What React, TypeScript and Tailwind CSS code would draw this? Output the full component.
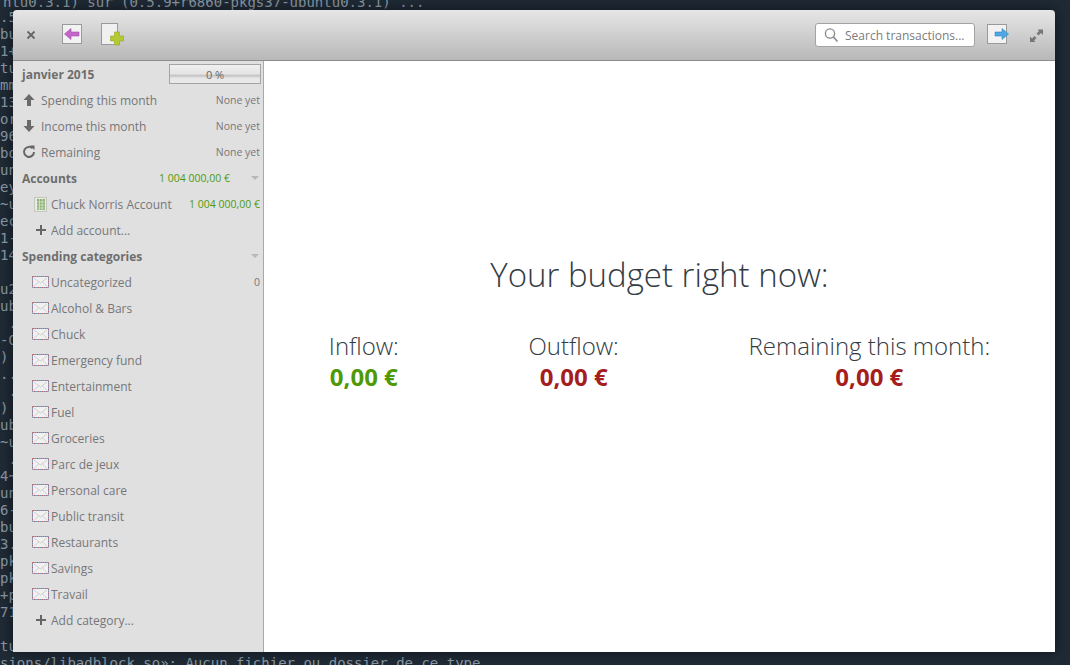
import React from "react";

const terminalLines = [
  ".5", "bu", "1+", "tu", "mm", "13", "or", "96", "bo", "un", "ey", "~u", "ec", "1-", "14", "",
  "u2", "ub", " .", "-O", ")", "..", " .", ")", "ub", "~u", " .", "4~", "un", "6-", "bu", "3.",
  "pk", "pk", "+p", "71", "", "tu",
];

const categories = [
  "Uncategorized",
  "Alcohol & Bars",
  "Chuck",
  "Emergency fund",
  "Entertainment",
  "Fuel",
  "Groceries",
  "Parc de jeux",
  "Personal care",
  "Public transit",
  "Restaurants",
  "Savings",
  "Travail",
];

function Envelope() {
  return (
    <svg width="18" height="14" viewBox="0 0 18 14" className="shrink-0">
      <rect x="0.5" y="1.5" width="16" height="11" fill="#f1f1f1" />
      <rect x="0.5" y="1.5" width="16" height="11" fill="none" stroke="#b5636a" strokeDasharray="2 2" />
      <rect x="0.5" y="1.5" width="16" height="11" fill="none" stroke="#6f93ba" strokeDasharray="2 2" strokeDashoffset="2" />
      <path d="M2 3l6.5 5L15 3M2 11.5l4.5-4.5M15 11.5L10.5 7" fill="none" stroke="#cfcfcf" />
    </svg>
  );
}

function ArrowUp() {
  return (
    <svg width="14" height="14" viewBox="0 0 14 14" className="shrink-0">
      <path d="M7 1l5.5 6H9v6H5V7H1.5z" fill="#6a6a6a" />
    </svg>
  );
}

function ArrowDown() {
  return (
    <svg width="14" height="14" viewBox="0 0 14 14" className="shrink-0">
      <path d="M7 13l5.5-6H9V1H5v6H1.5z" fill="#6a6a6a" />
    </svg>
  );
}

function Refresh() {
  return (
    <svg width="14" height="14" viewBox="0 0 14 14" className="shrink-0">
      <path d="M10.6 3.4A5 5 0 1 0 12 7" fill="none" stroke="#666" strokeWidth="2" />
      <path d="M8 0.5h4.5V5z" fill="#666" />
    </svg>
  );
}

function Plus() {
  return (
    <svg width="12" height="12" viewBox="0 0 12 12" className="shrink-0">
      <path d="M5 1h2v4h4v2H7v4H5V7H1V5h4z" fill="#666" />
    </svg>
  );
}

function Chevron() {
  return <div className="w-0 h-0 border-x-[4px] border-x-transparent border-t-[4px] border-t-[#b8b8b8]" />;
}

function Ledger() {
  return (
    <svg width="13" height="15" viewBox="0 0 13 15" className="shrink-0">
      <rect x="0.5" y="0.5" width="12" height="14" fill="#e8ebe2" stroke="#c4c8bc" />
      <rect x="3" y="2" width="8" height="11" fill="#8fb27a" />
      <path d="M3 5h8M3 8h8M3 11h8M5.5 2v11M8.2 2v11" stroke="#d6e2cc" strokeWidth="0.8" />
    </svg>
  );
}

function Row({ icon, label, right, className }: { icon: React.ReactNode; label: string; right?: string; className?: string }) {
  return (
    <div className={`h-[26px] flex items-center ${className ?? "pl-[9px]"} pr-[3px]`}>
      <div className="w-[19px] flex">{icon}</div>
      <span className="flex-1 truncate">{label}</span>
      {right && <span className="text-[10.5px]">{right}</span>}
    </div>
  );
}

function SubRow({ icon, label, right, rightClass }: { icon: React.ReactNode; label: string; right?: string; rightClass?: string }) {
  return (
    <div className="h-[26px] flex items-center pl-[17px] pr-[3px]">
      <div className="w-[21px] flex justify-center">{icon}</div>
      <span className="flex-1 truncate">{label}</span>
      {right && <span className={`text-[10.5px] ${rightClass ?? ""}`}>{right}</span>}
    </div>
  );
}

function Sidebar() {
  return (
    <aside className="w-[251px] shrink-0 bg-[#e0e0e0] border-r border-[#a9a9a9] text-[12px] text-[#77777a]">
      <div className="h-[26px] flex items-center pl-[9px] pr-[2px]">
        <span className="flex-1 font-bold text-[#6e6e6e]">janvier 2015</span>
        <div className="w-[92px] h-[20px] border border-[#a4a4a4] bg-[linear-gradient(#f0f0f0_0%,#e4e4e4_50%,#c4c4c4_58%,#e8e8e8_75%,#e8e8e8_100%)] flex items-center justify-center text-[11px] text-[#666]">
          0 %
        </div>
      </div>
      <Row icon={<ArrowUp />} label="Spending this month" right="None yet" />
      <Row icon={<ArrowDown />} label="Income this month" right="None yet" />
      <Row icon={<Refresh />} label="Remaining" right="None yet" />
      <div className="h-[26px] flex items-center pl-[9px] pr-[4px] font-bold text-[#6e6e6e]">
        <span className="flex-1">Accounts</span>
        <span className="font-normal text-[10.5px] text-[#4f9a0c] mr-[21px]">1 004 000,00 €</span>
        <Chevron />
      </div>
      <SubRow icon={<Ledger />} label="Chuck Norris Account" right="1 004 000,00 €" rightClass="text-[#4f9a0c]" />
      <SubRow icon={<Plus />} label="Add account..." />
      <div className="h-[26px] flex items-center justify-between pl-[9px] pr-[4px] font-bold text-[#6e6e6e]">
        <span>Spending categories</span>
        <Chevron />
      </div>
      {categories.map((c, i) => (
        <SubRow key={c} icon={<Envelope />} label={c} right={i === 0 ? "0" : undefined} />
      ))}
      <SubRow icon={<Plus />} label="Add category..." />
    </aside>
  );
}

function Toolbar() {
  return (
    <header className="h-[51px] shrink-0 flex items-center bg-[linear-gradient(#e6e6e6,#b8b8b8)] border-b border-[#8d8d8d] rounded-t-[4px]">
      <svg width="10" height="10" viewBox="0 0 10 10" className="ml-[13px]">
        <path d="M1.5 1.5l7 7M8.5 1.5l-7 7" stroke="#666" strokeWidth="1.8" />
      </svg>
      <svg width="24" height="22" viewBox="0 0 24 22" className="ml-[26px]">
        <rect x="0.5" y="0.5" width="19" height="19" fill="#f2f2f2" stroke="#9a9a9a" />
        <path d="M8 4.5v3.5h8v4H8v3.5L1.5 10z" transform="translate(1 0)" fill="#c566c8" stroke="#a24aa8" strokeWidth="0.6" />
      </svg>
      <svg width="24" height="24" viewBox="0 0 24 24" className="ml-[15px]">
        <rect x="0.5" y="0.5" width="16" height="21" fill="#f0f0f0" stroke="#9a9a9a" />
        <path d="M14 9h5v4h4v5h-4v4h-5v-4h-4v-5h4z" transform="translate(-0.5 0)" fill="#b5c934" stroke="#93a52a" strokeWidth="0.6" />
      </svg>
      <div className="flex-1" />
      <div className="w-[160px] h-[24px] flex items-center gap-[6px] px-[8px] bg-white border border-[#a3a3a3] rounded-[3px] text-[12px] text-[#7c7c7c]">
        <svg width="15" height="16" viewBox="0 0 15 16" className="shrink-0">
          <circle cx="6" cy="6.5" r="4.6" fill="none" stroke="#888" strokeWidth="1.3" />
          <path d="M9.5 10l4 4.5" stroke="#888" strokeWidth="1.6" />
        </svg>
        Search transactions...
      </div>
      <svg width="24" height="22" viewBox="0 0 24 22" className="ml-[12px]">
        <rect x="0.5" y="0.5" width="19" height="19" fill="#f2f2f2" stroke="#9a9a9a" />
        <path d="M15 4.5v3.5H8v4h7v3.5L21.5 10z" fill="#4fa6e0" stroke="#2f85c2" strokeWidth="0.6" />
      </svg>
      <svg width="13" height="13" viewBox="0 0 13 13" className="ml-[19px] mr-[12px]">
        <path d="M7.5 0.5H13V6l-2-2-2.5 2.5L6.5 4.5 9 2z M5.5 13H0V7.5l2 2L4.5 7l2 2L4 11.5z" fill="#777" />
      </svg>
    </header>
  );
}

function Stat({ label, value, color }: { label: string; value: string; color: string }) {
  return (
    <div className="flex flex-col items-center">
      <div className="text-[24px] leading-[32px] font-light text-[#333b44]">{label}</div>
      <div className={`text-[24px] leading-[30px] font-bold ${color}`}>{value}</div>
    </div>
  );
}

export default function App() {
  return (
    <div className="relative w-[1070px] h-[665px] overflow-hidden bg-[#1f2a35] font-['DejaVu_Sans_Mono',monospace] text-[14px] leading-[17px] text-[#8a98a4]">
      <div className="whitespace-pre">
        <div className="h-[9px] leading-[5px] pl-[3px]">ntu0.3.1) sur (0.5.9+r6860-pkgs37-ubuntu0.3.1) ...</div>
        {terminalLines.map((l, i) => (
          <div key={i} className="h-[17px]">{l || " "}</div>
        ))}
        <div className="h-[17px]">sions/libadblock.so»: Aucun fichier ou dossier de ce type</div>
      </div>

      <div className="absolute left-[13px] top-[10px] w-[1042px] h-[642px] flex flex-col font-['Open_Sans',sans-serif] shadow-[0_0_12px_rgba(0,0,0,0.5)]">
        <Toolbar />
        <div className="flex-1 flex min-h-0">
          <Sidebar />
          <main className="flex-1 bg-white flex flex-col pt-[191px]">
            <h1 className="text-[33px] leading-[45px] font-light text-center text-[#333b44]">Your budget right now:</h1>
            <div className="flex justify-around mt-[33px]">
              <Stat label="Inflow:" value="0,00 €" color="text-[#4e9a06]" />
              <Stat label="Outflow:" value="0,00 €" color="text-[#a51d1d]" />
              <Stat label="Remaining this month:" value="0,00 €" color="text-[#a51d1d]" />
            </div>
          </main>
        </div>
      </div>
    </div>
  );
}
